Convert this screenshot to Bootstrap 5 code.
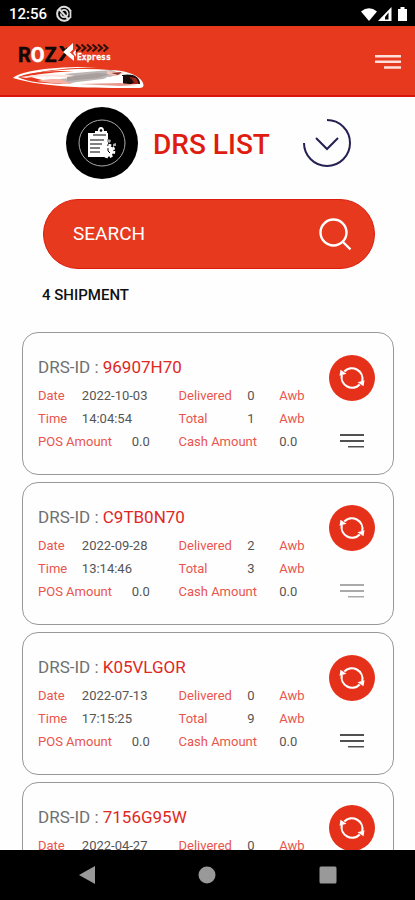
<!DOCTYPE html>
<html lang="en">
<head>
<meta charset="utf-8">
<meta name="viewport" content="width=device-width, initial-scale=1">
<title>DRS List</title>
<link href="https://cdn.jsdelivr.net/npm/bootstrap@5.3.0/dist/css/bootstrap.min.css" rel="stylesheet">
<style>
  body { font-family: Roboto, "Liberation Sans", sans-serif; color: #111; background: #fefefe; }
  svg { display: block; flex: none; }
  .status { height: 26px; font-size: 15px; line-height: 26px; font-weight: 500; padding: 1px 5px 0 9px; }
  .topbar { background: #e6391e; height: 71px; border-bottom: 2px solid #d8160a; padding: 0 14px 0 12px; }
  .topbar .btn { margin-top: 3px; }
  .scroller { overflow-y: auto; min-height: 0; scrollbar-width: none; }
  .scroller::-webkit-scrollbar { display: none; }
  .heading { padding: 10px 0 20px 2px; }
  .heading h1 { font-size: 28px; line-height: 32px; font-weight: 500; color: #df1c10; margin: 3px 33px 0 15px; }
  .search { background: #e6391e; border: 1px solid #dc1c0c; height: 70px; margin: 0 40px 0 43px; padding: 0 23px 0 29px; }
  .search input { font-size: 19px; color: #fff; min-width: 0; }
  .search input::placeholder { color: #fff; opacity: 1; }
  .count { font-size: 15px; line-height: 20px; font-weight: 500; margin: 16px 42px 27px; }
  .shipments { padding: 0 21px 20px 22px; gap: 7px; }
  .shipment { border: 1px solid #999; border-radius: 16px; padding: 22px 18px 21px 15px; background: #fefefe; }
  .shipment h2 { font-size: 17px; line-height: 24px; font-weight: 400; color: #707070; margin: 0 0 5px; }
  .shipment h2 span { color: #e0281f; }
  .facts { display: grid; grid-template-columns: 44fr 50fr 47fr 69fr 32fr 45fr; font-size: 13px; line-height: 23px; margin: 0; white-space: nowrap; }
  .facts dt { font-weight: 400; color: #e8554d; }
  .facts dd { margin: 0; color: #555; }
  .wide { grid-column: span 2; }
  .sync { width: 46px; height: 46px; background: #e6311a; }
  .actions { margin-left: 5px; gap: 33px; }
  .lines { color: #505050; }
  .lines.muted { color: #aaa; }
  .softkeys { height: 50px; padding: 0 27px; color: #999; }
</style>
<script src="https://cdn.jsdelivr.net/npm/bootstrap@5.3.0/dist/js/bootstrap.bundle.min.js"></script>
</head>
<body class="vh-100 d-flex flex-column overflow-hidden">
<svg width="0" height="0" class="position-absolute" aria-hidden="true">
  <symbol id="sync" viewBox="0 0 26 26">
    <g fill="none" stroke="#fff" stroke-width="2.2">
      <path d="M5.300 6.600A10.500 10.500 0 0 1 23.200 16"/>
      <path d="M20.700 19.400A10.500 10.500 0 0 1 2.800 10"/>
    </g>
    <path fill="#fff" d="M.5 10.800 1.500 4.800 7.500 8.800zM25.500 15.200 24.500 21.200 18.500 17.200z"/>
  </symbol>
  <symbol id="lines" viewBox="0 0 24 14">
    <path fill="currentColor" d="M0 0h24v2H0zM0 6h24v2H0zM8 12h16v1.500H8z"/>
  </symbol>
</svg>

<div class="status bg-black text-white d-flex align-items-center flex-shrink-0">
  <span>12:56</span>
  <svg class="ms-2" width="18" height="18" viewBox="0 0 18 18" fill="none" stroke="#ddd" aria-hidden="true">
    <path stroke-width="2" d="M15 12.500A7 7 0 1 1 15.500 6M4.500 4.500 14 15"/>
    <path stroke-width="1.700" d="M6.500 5.500Q12 3.500 12.700 8.500 12.500 12 9 12.200 5.800 12 5.800 8.500M15.500 5v8"/>
  </svg>
  <svg class="ms-auto" width="50" height="18" viewBox="0 0 50 18" fill="#fff" aria-hidden="true">
    <path d="M1 6.500Q9 0 17 6.500L9 16z"/>
    <path d="M31.500 2v14H18zM28.500 7.500 25 12v2.500h3.500z" fill-rule="evenodd"/>
    <path d="M38 4h2.500V2h4v2H47v12h-9z"/>
  </svg>
</div>

<header class="topbar d-flex align-items-center justify-content-between flex-shrink-0">
  <a href="#" aria-label="Roz Express">
    <svg width="134" height="54" viewBox="0 0 134 54">
      <text x="6" y="28" font-family="Roboto, sans-serif" font-size="20" font-weight="700" fill="#120806" stroke="#120806" stroke-width=".5">R<tspan fill="#fff" stroke="#fff">O</tspan>Z</text>
      <path d="M47 12h4l5 7-6 8h-4l3-4 3-4-3-4z" fill="#120806"/>
      <path d="M54 14l2 2" stroke="#120806" stroke-width="2"/>
      <path d="M61 9 51 18l11 9V22l-4-3.500 3-3z" fill="#fff"/>
      <path d="M64 15l-3 4 3 4v-3l-1-1 1-1z" fill="#fff"/>
      <path d="M64 10.500l4 3.500-4 3.500M69.500 10.500l4 3.500-4 3.500M75 10.500l4 3.500-4 3.500M80.500 10.500l4 3.500-4 3.500M86 10.500l4 3.500-4 3.500M91.500 10.500l4 3.500-4 3.500" fill="none" stroke="#321009" stroke-width="2"/>
      <text x="65" y="26" font-family="'DejaVu Sans Mono', monospace" font-size="8" font-weight="700" fill="#fff" stroke="#fff" stroke-width=".3">Express</text>
      <path d="M1 44C7 38 33 32 85 33 57 34 34 36 20 40c24-5 53-6 78-4 13 0 29 4 33 13 2 5-2 5-7 5C82 54 34 54 1 44z" fill="#fff"/>
      <path d="M6 43c15-6 36-6 56-6-19 1-34 3-45 5 10 4 22 6 39 8C35 50 15 48 6 43z" fill="#e6391e"/>
      <path d="M8 43c15-3 32-3 54-2v3c-20-2-36-2-48 0z" fill="#fde5df"/>
      <path d="M25 47c12-3 27-2 42-1l-9 4c-12 0-22-1-33-3z" fill="#f7b0a3"/>
      <path d="M52 40l34-3 14-1 9 4-18 5-34 4-9-4 20-2z" fill="#bcb5b3"/>
      <path d="M55 43l30-4 13 1-12 4-31 3z" fill="#a8a09e"/>
      <path d="M95 37l17 2-8 3-9-2z" fill="#f5c5bc"/>
      <path d="M99 39l11-1-4 3z" fill="#8e352b"/>
      <path d="M110 41c10-2 18 1 18 9h-17z" fill="#180b09"/>
      <path d="M118 43l6 1 3 6h-7z" fill="#9c241a"/>
      <path d="M119 44l3 5h-5z" fill="#180b09"/>
      <path d="M66 50l42-1 18 2-17 1z" fill="#e8998d"/>
      <path d="M89 48l6-5 16-1v7z" fill="#fff"/>
    </svg>
  </a>
  <button type="button" class="btn p-0 border-0 text-white" aria-label="Menu">
    <svg width="26" height="17" viewBox="0 0 26 17" fill="#fde0db"><path d="M0 1h26v2.500H0zM0 6.500h26V9H0zM9 12.200h17v2.500H9z"/></svg>
  </button>
</header>

<main class="scroller flex-fill">
  <div class="heading d-flex align-items-center justify-content-center">
    <svg width="72" height="72" viewBox="0 0 72 72" aria-hidden="true">
      <circle cx="36" cy="36" r="36" fill="#000"/>
      <circle cx="36" cy="36" r="23" fill="none" stroke="#aaa"/>
      <path d="M22 26h7v-2h3q0-4 3-4t3 4h3v2h1v11l-3 4v6l4 3H22z" fill="#fff"/>
      <circle cx="35" cy="23.500" r="1.300" fill="#000"/>
      <path d="M27 28h13M24 33h14M24 37h12M24 41h10M24 45h10" stroke="#000" stroke-width="1.200"/>
      <circle cx="42" cy="44" r="5.500" fill="#fff"/>
      <circle cx="42" cy="44" r="6.300" fill="none" stroke="#fff" stroke-width="2" stroke-dasharray="2.900 2"/>
      <path d="M42 41v3l2 2" fill="none" stroke="#000"/>
      <path d="M41 32l4 1-1 3-3-1zM47 37l3-1v3h-3z" fill="#aaa"/>
    </svg>
    <h1>DRS LIST</h1>
    <button type="button" class="btn p-0 border-0" aria-label="Expand">
      <svg width="48" height="50" viewBox="0 0 48 50" fill="none" stroke="#242052" stroke-width="2"><path d="M24 2A23 23 0 1 1 1 25M13 20l11 11 11-11"/></svg>
    </button>
  </div>

  <form class="search rounded-pill d-flex align-items-center" role="search" onsubmit="return false">
    <input type="search" class="flex-fill bg-transparent border-0 p-0" placeholder="SEARCH" aria-label="Search">
    <button type="submit" class="btn p-0 border-0" aria-label="Search">
      <svg width="32" height="34" viewBox="0 0 32 34" fill="none" stroke="#fff" stroke-width="2.400"><circle cx="14.500" cy="15.500" r="13"/><path d="M24 25l7.500 7.500"/></svg>
    </button>
  </form>

  <p class="count">4 SHIPMENT</p>

  <section class="shipments d-flex flex-column" aria-label="Shipments">
    <article class="shipment d-flex">
      <div class="flex-fill">
        <h2>DRS-ID : <span>96907H70</span></h2>
        <dl class="facts">
          <dt>Date</dt><dd class="wide">2022-10-03</dd><dt>Delivered</dt><dd>0</dd><dt>Awb</dt>
          <dt>Time</dt><dd class="wide">14:04:54</dd><dt>Total</dt><dd>1</dd><dt>Awb</dt>
          <dt class="wide">POS Amount</dt><dd>0.0</dd><dt class="wide">Cash Amount</dt><dd>0.0</dd>
        </dl>
      </div>
      <div class="actions d-flex flex-column align-items-center">
        <button type="button" class="sync btn rounded-circle border-0 p-0 d-flex align-items-center justify-content-center" aria-label="Sync 96907H70"><svg width="26" height="26"><use href="#sync"/></svg></button>
        <button type="button" class="lines btn border-0 p-0" aria-label="Details of 96907H70"><svg width="24" height="14"><use href="#lines"/></svg></button>
      </div>
    </article>
    <article class="shipment d-flex">
      <div class="flex-fill">
        <h2>DRS-ID : <span>C9TB0N70</span></h2>
        <dl class="facts">
          <dt>Date</dt><dd class="wide">2022-09-28</dd><dt>Delivered</dt><dd>2</dd><dt>Awb</dt>
          <dt>Time</dt><dd class="wide">13:14:46</dd><dt>Total</dt><dd>3</dd><dt>Awb</dt>
          <dt class="wide">POS Amount</dt><dd>0.0</dd><dt class="wide">Cash Amount</dt><dd>0.0</dd>
        </dl>
      </div>
      <div class="actions d-flex flex-column align-items-center">
        <button type="button" class="sync btn rounded-circle border-0 p-0 d-flex align-items-center justify-content-center" aria-label="Sync C9TB0N70"><svg width="26" height="26"><use href="#sync"/></svg></button>
        <button type="button" class="lines muted btn border-0 p-0" aria-label="Details of C9TB0N70"><svg width="24" height="14"><use href="#lines"/></svg></button>
      </div>
    </article>
    <article class="shipment d-flex">
      <div class="flex-fill">
        <h2>DRS-ID : <span>K05VLGOR</span></h2>
        <dl class="facts">
          <dt>Date</dt><dd class="wide">2022-07-13</dd><dt>Delivered</dt><dd>0</dd><dt>Awb</dt>
          <dt>Time</dt><dd class="wide">17:15:25</dd><dt>Total</dt><dd>9</dd><dt>Awb</dt>
          <dt class="wide">POS Amount</dt><dd>0.0</dd><dt class="wide">Cash Amount</dt><dd>0.0</dd>
        </dl>
      </div>
      <div class="actions d-flex flex-column align-items-center">
        <button type="button" class="sync btn rounded-circle border-0 p-0 d-flex align-items-center justify-content-center" aria-label="Sync K05VLGOR"><svg width="26" height="26"><use href="#sync"/></svg></button>
        <button type="button" class="lines btn border-0 p-0" aria-label="Details of K05VLGOR"><svg width="24" height="14"><use href="#lines"/></svg></button>
      </div>
    </article>
    <article class="shipment d-flex">
      <div class="flex-fill">
        <h2>DRS-ID : <span>7156G95W</span></h2>
        <dl class="facts">
          <dt>Date</dt><dd class="wide">2022-04-27</dd><dt>Delivered</dt><dd>0</dd><dt>Awb</dt>
        </dl>
      </div>
      <div class="actions d-flex flex-column align-items-center">
        <button type="button" class="sync btn rounded-circle border-0 p-0 d-flex align-items-center justify-content-center" aria-label="Sync 7156G95W"><svg width="26" height="26"><use href="#sync"/></svg></button>
        <button type="button" class="lines btn border-0 p-0" aria-label="Details of 7156G95W"><svg width="24" height="14"><use href="#lines"/></svg></button>
      </div>
    </article>
  </section>
</main>

<nav class="softkeys bg-black d-flex align-items-center justify-content-around flex-shrink-0" aria-label="System">
  <button type="button" class="btn p-0 border-0" aria-label="Back"><svg width="18" height="18" viewBox="0 0 18 18"><path d="M17 0v18L1 9z" fill="#999"/></svg></button>
  <button type="button" class="btn p-0 border-0" aria-label="Home"><svg width="18" height="18" viewBox="0 0 18 18"><circle cx="9" cy="9" r="8.500" fill="#999"/></svg></button>
  <button type="button" class="btn p-0 border-0" aria-label="Recent apps"><svg width="18" height="18" viewBox="0 0 18 18"><rect x=".5" y=".5" width="17" height="17" rx="1.500" fill="#999"/></svg></button>
</nav>
</body>
</html>
